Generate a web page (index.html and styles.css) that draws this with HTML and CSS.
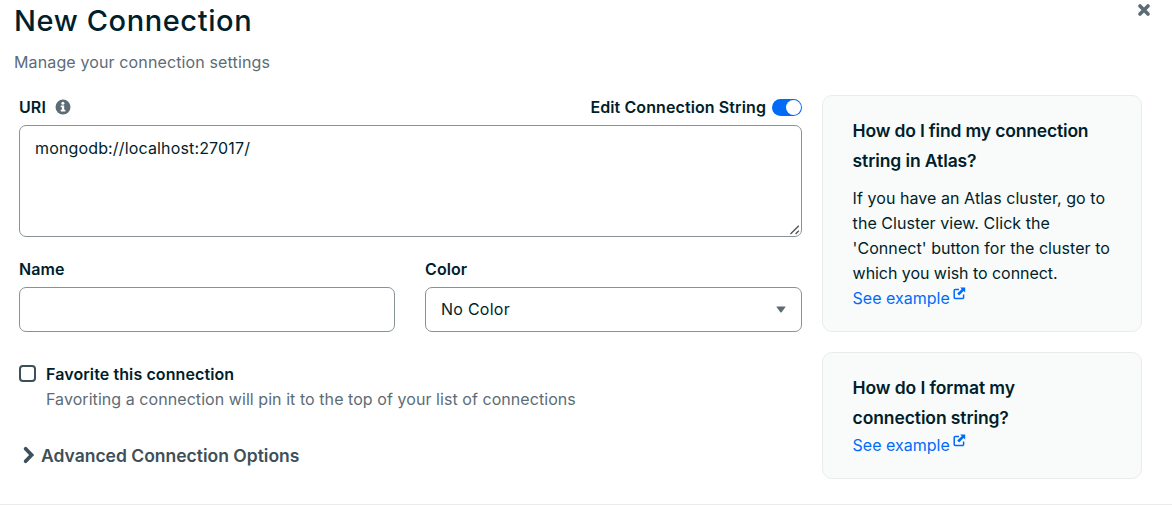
FILE: index.html
```html
<!DOCTYPE html>
<html lang="en">
<head>
<meta charset="utf-8">
<title>New Connection</title>
<link rel="stylesheet" href="styles.css">
</head>
<body>
<main class="modal">
  <button class="close" type="button" aria-label="Close">
    <svg width="14" height="14" viewBox="0 0 14 14"><path d="M3 3l8 8M11 3l-8 8" stroke="#5c6c75" stroke-width="3.7" stroke-linecap="round"/></svg>
  </button>
  <header class="header">
    <h1 class="title">New Connection</h1>
    <p class="subtitle">Manage your connection settings</p>
  </header>
  <div class="columns">
    <form class="form">
      <div class="uri-row">
        <label class="label uri-label" for="uri">URI</label>
        <svg class="info" width="16" height="16" viewBox="0 0 16 16"><circle cx="8" cy="8" r="7.5" fill="#5c6c75"/><circle cx="7.9" cy="4.2" r="1.5" fill="#fff"/><path d="M5.8 6.4h3.4v4.4h1.2v1.8H5.7v-1.8h1.2V8.2H5.8z" fill="#fff"/></svg>
        <span class="label toggle-label">Edit Connection String</span>
        <span class="toggle"><span class="knob"></span></span>
      </div>
      <div class="uri-wrap">
        <textarea class="uri" id="uri" spellcheck="false">mongodb://localhost:27017/</textarea>
        <svg class="grip" width="12" height="12" viewBox="0 0 12 12"><path d="M1.5 10L9.8 1.7M6.6 10l3.2-3.2" stroke="#555" stroke-width="1.4"/></svg>
      </div>
      <div class="fields">
        <div class="field">
          <label class="label name-label" for="name">Name</label>
          <input class="box" id="name" type="text">
        </div>
        <div class="field field-color">
          <span class="label">Color</span>
          <div class="box select"><span class="value">No Color</span>
            <svg width="10" height="7" viewBox="0 0 10 7"><path d="M.8.5h8.4q.7 0 .3.6L5.6 6.2q-.6.7-1.2 0L.5 1.1Q.1.5.8.5z" fill="#5c6c75"/></svg>
          </div>
        </div>
      </div>
      <div class="favorite">
        <span class="checkbox"></span>
        <div class="favorite-text">
          <div class="label">Favorite this connection</div>
          <div class="hint">Favoriting a connection will pin it to the top of your list of connections</div>
        </div>
      </div>
      <div class="advanced">
        <svg width="14" height="18" viewBox="0 0 14 18"><path d="M3.6 2.8l6 6.2-6 6.2" fill="none" stroke="#3d4f58" stroke-width="3.7" stroke-linecap="round"/></svg>
        <span class="advanced-text">Advanced Connection Options</span>
      </div>
    </form>
    <aside class="help">
      <section class="card">
        <h2 class="question"><span class="tight">How do I find my connection</span><br>string in Atlas?</h2>
        <p class="answer">If you have an Atlas cluster, go to<br>the Cluster view. Click the<br>'Connect' button for the cluster to<br><span class="last-line">which you wish to connect.</span></p>
        <a class="link">See example<svg class="external" width="13" height="13" viewBox="0 0 13 13"><path d="M6 2.4H2.2q-1 0-1 1v7q0 1 1 1h7.4q1 0 1-1V7.4" fill="none" stroke="#016bf8" stroke-width="1.5"/><path d="M7.2.6H12.2v5L10.5 4 6.1 8.4 4.2 6.5 8.7 2.3z" fill="#016bf8"/></svg></a>
      </section>
      <section class="card card-format">
        <h2 class="question">How do I format my<br>connection string?</h2>
        <a class="link">See example<svg class="external" width="13" height="13" viewBox="0 0 13 13"><path d="M6 2.4H2.2q-1 0-1 1v7q0 1 1 1h7.4q1 0 1-1V7.4" fill="none" stroke="#016bf8" stroke-width="1.5"/><path d="M7.2.6H12.2v5L10.5 4 6.1 8.4 4.2 6.5 8.7 2.3z" fill="#016bf8"/></svg></a>
      </section>
    </aside>
  </div>
  <div class="divider"></div>
</main>
</body>
</html>
```
FILE: styles.css
```css
* { box-sizing: border-box; }
body { margin: 0; width: 1172px; height: 509px; overflow: hidden; background: #fff; color: #001e2b; font-family: Inter, "Liberation Sans", sans-serif; font-size: 16px; }
h1, h2, p { margin: 0; }
input, textarea, button { font: inherit; color: inherit; }
.modal { position: relative; }
.close { position: absolute; top: 3px; right: 21px; width: 14px; height: 14px; padding: 0; border: 0; background: none; }
.close svg { display: block; }
.header { padding-left: 14px; height: 95px; }
.title { font-size: 29px; font-weight: 500; line-height: 42px; letter-spacing: 0.6px; }
.subtitle { padding-top: 8px; line-height: 25px; letter-spacing: 0.13px; color: #5c6c75; }
.columns { display: flex; gap: 20px; padding-left: 19px; height: 409px; }
.form { width: 783px; }
.label { display: block; font-weight: 600; line-height: 25px; letter-spacing: 0.1px; }
.uri-row { display: flex; align-items: center; height: 25px; margin-bottom: 5px; }
.info { margin: 0 0 1px 9.5px; }
.toggle-label { margin-left: auto; }
.toggle { width: 30px; height: 17px; margin-left: 6px; border-radius: 9px; background: #016bf8; padding: 1px; }
.knob { display: block; width: 15px; height: 15px; margin-left: auto; border-radius: 50%; background: #fff; }
.uri-wrap { position: relative; }
.uri { display: block; width: 783px; height: 112px; padding: 10px 15px; border: 1px solid #889397; border-radius: 7px; line-height: 25px; letter-spacing: 0.15px; outline: 0; resize: none; }
.grip { position: absolute; right: 1px; bottom: 1px; }
.fields { display: flex; gap: 30px; margin-top: 20px; }
.field { width: 376px; }
.field-color { width: 377px; }
.box { width: 100%; height: 45px; margin-top: 5px; border: 1px solid #889397; border-radius: 7px; }
.select { display: flex; justify-content: space-between; align-items: center; padding: 0 15px; }
.value { padding-bottom: 2px; letter-spacing: 0.25px; }
.favorite { display: flex; gap: 10px; margin-top: 30px; }
.checkbox { width: 17px; height: 17px; margin-top: 3px; border: 2px solid #3d4f58; border-radius: 4px; }
.hint { line-height: 25px; letter-spacing: 0.06px; color: #5c6c75; }
.advanced { display: flex; align-items: center; gap: 5px; height: 22px; margin-top: 32px; padding-left: 3px; color: #3d4f58; font-size: 17.5px; font-weight: 600; }
.help { width: 320px; }
.card { height: 237px; margin-bottom: 20px; padding: 20px 0 0 29.6px; border: 1px solid #e8edeb; border-radius: 10px; background: #f9fbfa; }
.card-format { height: 127px; }
.question { font-size: 17.5px; font-weight: 600; line-height: 30px; letter-spacing: -0.1px; }
.tight { letter-spacing: -0.17px; }
.answer { margin-top: 10px; line-height: 25px; letter-spacing: 0.06px; }
.last-line { letter-spacing: -0.05px; }
.link { color: #016bf8; line-height: 25px; }
.external { margin-left: 3px; vertical-align: 4px; margin-top: -6px; }
.divider { height: 1px; background: #e8edeb; }
```
